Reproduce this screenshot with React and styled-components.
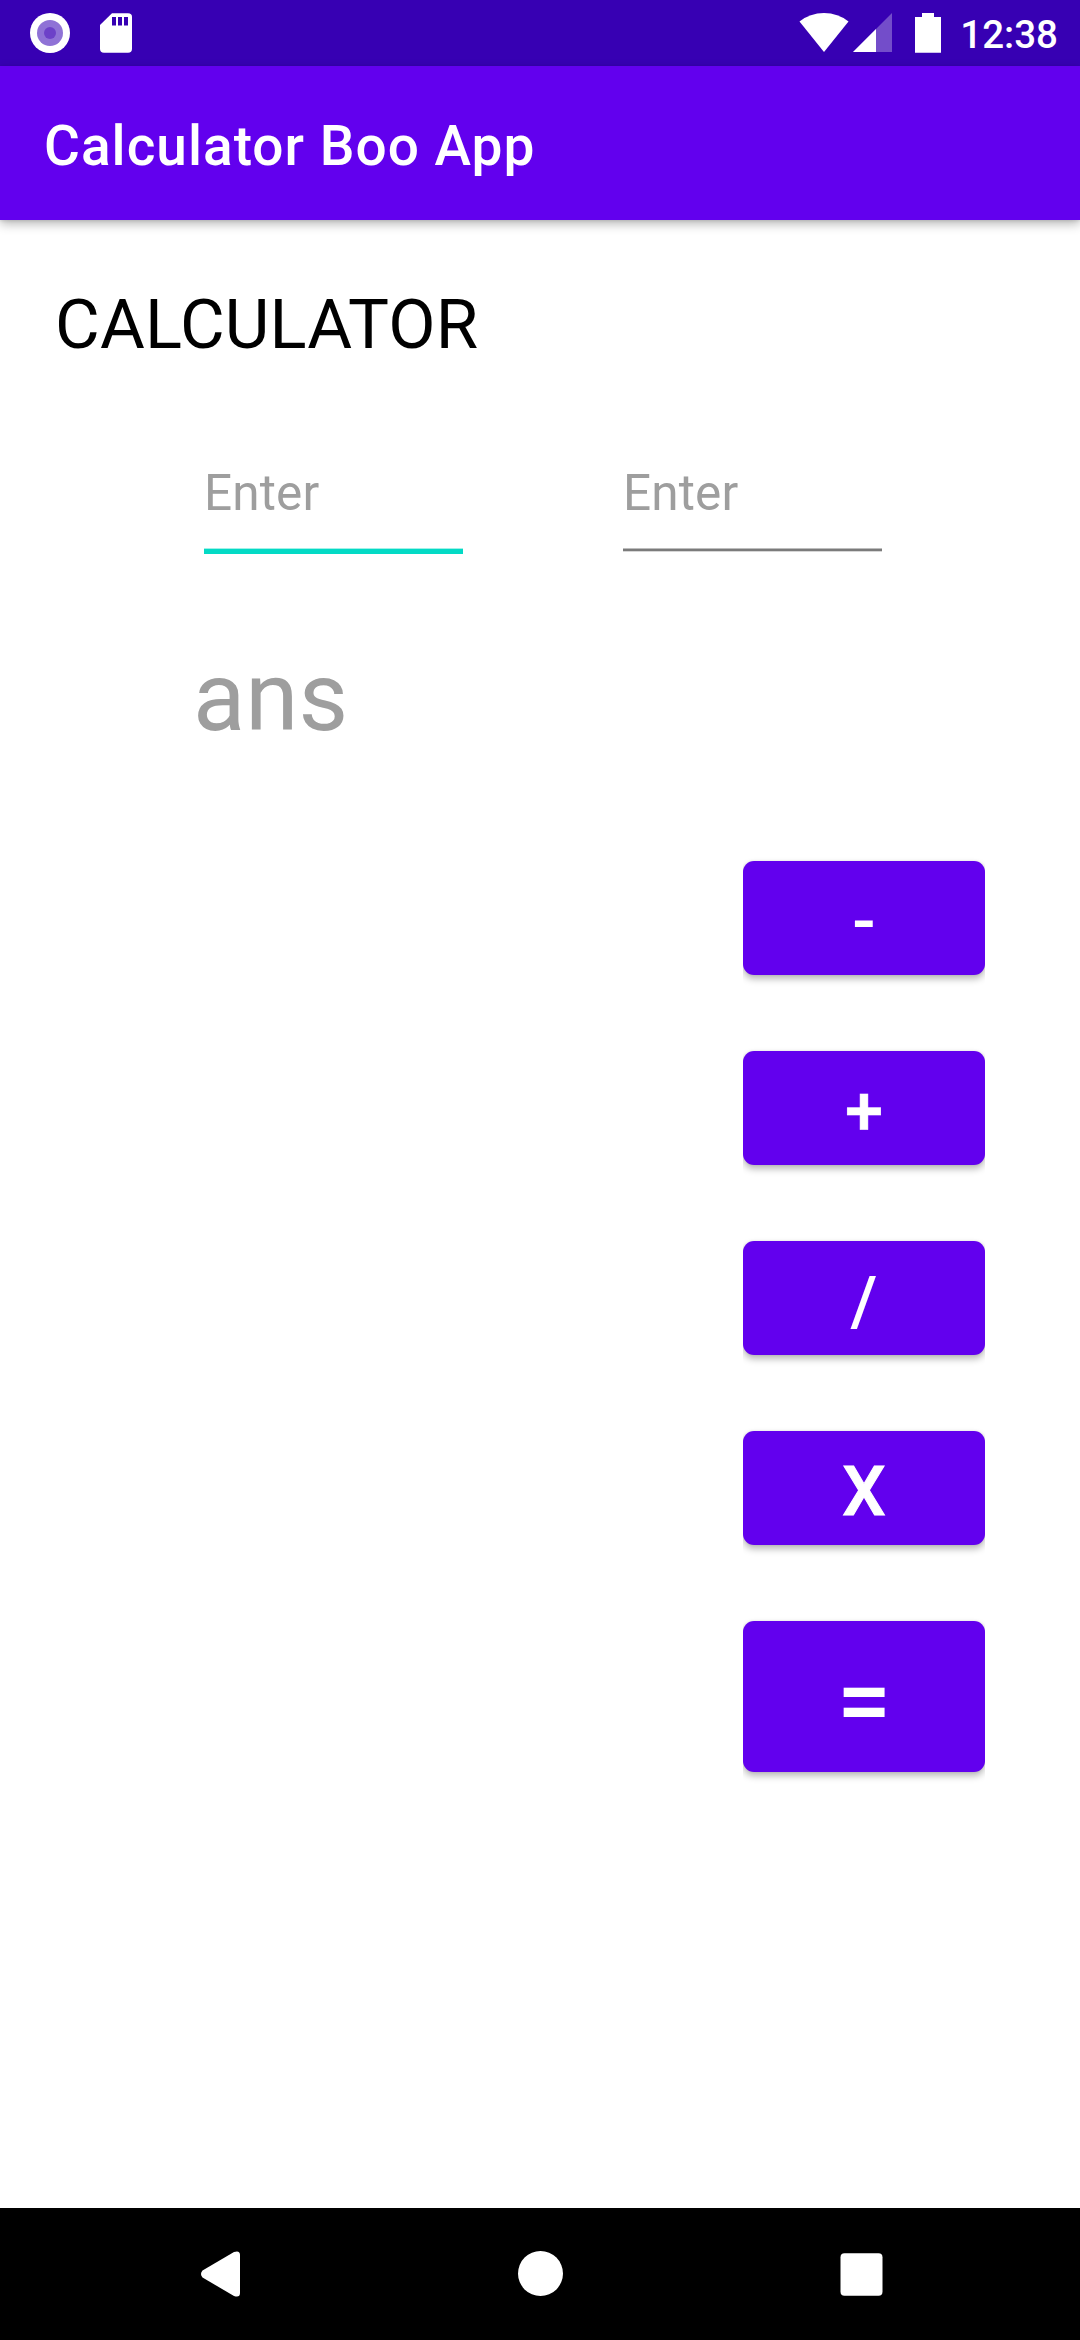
import React from "react";
import styled, { createGlobalStyle } from "styled-components";

const Global = createGlobalStyle`
  * { box-sizing: border-box; }
  body { margin: 0; background: #fff; font-family: Roboto, "Noto Sans", sans-serif; }
`;

const Screen = styled.div`
  display: flex;
  flex-direction: column;
  width: 1080px;
  height: 2340px;
  overflow: hidden;
  background: #fff;
`;

const StatusBar = styled.header`
  display: flex;
  justify-content: space-between;
  flex: none;
  height: 66px;
  padding: 0 22px 0 30px;
  background: #3700b3;
  color: #fff;
`;

const StatusGroup = styled.div`
  display: flex;
  align-items: flex-start;
  padding-top: 13px;
`;

const StatusIcon = styled.svg`
  display: block;
  flex: none;
  margin-left: ${(p) => p.$gap || 0}px;
`;

const Clock = styled.time`
  margin: -1px 0 0 19px;
  font-size: 38.5px;
  font-weight: 500;
  line-height: 45px;
`;

const AppBar = styled.div`
  position: relative;
  flex: none;
  height: 154px;
  padding: 48px 44px 0;
  background: #6200ee;
  box-shadow: 0 4px 10px rgba(0, 0, 0, 0.28), 0 1px 3px rgba(0, 0, 0, 0.1);
`;

const AppTitle = styled.h1`
  margin: 0;
  color: #fff;
  font-size: 55px;
  font-weight: 500;
  line-height: 64px;
  letter-spacing: 0.0185em;
`;

const Content = styled.main`
  display: flex;
  flex-direction: column;
  flex: 1;
  padding-top: 64px;
`;

const Heading = styled.h2`
  margin: 0 0 0 55px;
  font-size: 68.75px;
  font-weight: 400;
  line-height: 81px;
  letter-spacing: 0.15px;
  color: #000;
`;

const Fields = styled.div`
  display: flex;
  gap: 160px;
  height: 92px;
  margin: 99px 0 0 204px;
`;

const Field = styled.label`
  display: flex;
  flex-direction: column;
  width: 259px;
`;

const Input = styled.input`
  width: 100%;
  height: 58px;
  margin-bottom: 26px;
  padding: 0;
  border: 0;
  outline: 0;
  background: none;
  font: 400 49.5px/58px Roboto, "Noto Sans", sans-serif;
  letter-spacing: 0.15px;
  &::placeholder { color: #9e9e9e; opacity: 1; }
`;

const Underline = styled.span`
  height: ${(p) => (p.$active ? 6 : 4)}px;
  background: ${(p) => (p.$active ? "#03dac5" : "#7b7b7b")};
  border-top: 1px solid ${(p) => (p.$active ? "#a0f1e8" : "#bdbdbd")};
  border-bottom: ${(p) => (p.$active ? "0" : "1px solid #d6d6d6")};
`;

const Answer = styled.output`
  margin: 85px 0 0 193px;
  font-size: 96.25px;
  line-height: 113px;
  color: #9e9e9e;
`;

const Keys = styled.div`
  display: flex;
  flex-direction: column;
  align-self: flex-end;
  gap: 76px;
  width: 242px;
  margin: 107px 95px 0 0;
`;

const Key = styled.button`
  display: flex;
  align-items: center;
  justify-content: center;
  height: ${(p) => (p.$large ? 151 : 114)}px;
  padding: 9px 0 0;
  border: 0;
  border-radius: 11px;
  background: #6200ee;
  color: #fff;
  font-family: inherit;
  font-size: ${(p) => (p.$large ? 96.25 : 68.75)}px;
  font-weight: 500;
  line-height: 1.172;
  -webkit-text-stroke: ${(p) => p.$stroke || 0}px #fff;
  box-shadow: 0 4px 7px rgba(0, 0, 0, 0.28), 0 0 3px rgba(0, 0, 0, 0.08);
  clip-path: inset(-10px 0 -12px 0);
`;

const NavBar = styled.nav`
  display: flex;
  justify-content: space-between;
  flex: none;
  height: 132px;
  padding: 43px 197px 0 201px;
  background: #000;
`;

const keys = [
  { label: "-" },
  { label: "+", stroke: 0.5 },
  { label: "/" },
  { label: "X", stroke: 1 },
  { label: "=", large: true },
];

export default function App() {
  return (
    <Screen>
      <Global />
      <StatusBar>
        <StatusGroup>
          <StatusIcon width="40" height="40" viewBox="0 0 40 40">
            <circle cx="20" cy="20" r="20" fill="#fff" />
            <circle cx="20" cy="20" r="13" fill="#8f72d6" />
            <circle cx="20" cy="20" r="6" fill="#6c41c8" />
          </StatusIcon>
          <StatusIcon $gap={30} width="32" height="40" viewBox="0 0 32 40">
            <path d="M12 .3H28Q32 .3 32 4V36Q32 39.7 28 39.7H4Q0 39.7 0 36V12Z" fill="#fff" />
            <path d="M12 4H16V12.500H12ZM18 4H22V12.500H18ZM24 4H28V12.500H24Z" fill="#3700b3" />
          </StatusIcon>
        </StatusGroup>
        <StatusGroup>
          <StatusIcon width="50" height="40" viewBox="0 0 50 40">
            <path d="M25 39L.5 8.500Q11 0 25 0T49.500 8.500Z" fill="#fff" />
          </StatusIcon>
          <StatusIcon $gap={4} width="39" height="40" viewBox="0 0 39 40">
            <path d="M0 39L39 0V39Z" fill="#fff" fillOpacity=".3" />
            <path d="M0 39L23 16V39Z" fill="#fff" />
          </StatusIcon>
          <StatusIcon $gap={23} width="26" height="40" viewBox="0 0 26 40">
            <path d="M7 0H19V4H26V39.700H0V4H7Z" fill="#fff" />
          </StatusIcon>
          <Clock>12:38</Clock>
        </StatusGroup>
      </StatusBar>
      <AppBar>
        <AppTitle>Calculator Boo App</AppTitle>
      </AppBar>
      <Content>
        <Heading>CALCULATOR</Heading>
        <Fields>
          <Field>
            <Input placeholder="Enter" />
            <Underline $active />
          </Field>
          <Field>
            <Input placeholder="Enter" />
            <Underline />
          </Field>
        </Fields>
        <Answer>ans</Answer>
        <Keys>
          {keys.map((k) => (
            <Key key={k.label} $large={k.large} $stroke={k.stroke}>
              {k.label}
            </Key>
          ))}
        </Keys>
      </Content>
      <NavBar>
        <svg width="39" height="46" viewBox="0 0 39 46">
          <path d="M1.500 19.500Q-1.500 23 1.500 26.500L33 45Q39 47 39 42V4Q39-1 33 1Z" fill="#fff" />
        </svg>
        <svg width="45" height="46" viewBox="0 0 45 46">
          <circle cx="22.500" cy="22.500" r="22.500" fill="#fff" />
        </svg>
        <svg width="43" height="46" viewBox="0 0 43 46">
          <rect x=".5" y="2.300" width="42" height="42.500" rx="4" fill="#fff" />
        </svg>
      </NavBar>
    </Screen>
  );
}
